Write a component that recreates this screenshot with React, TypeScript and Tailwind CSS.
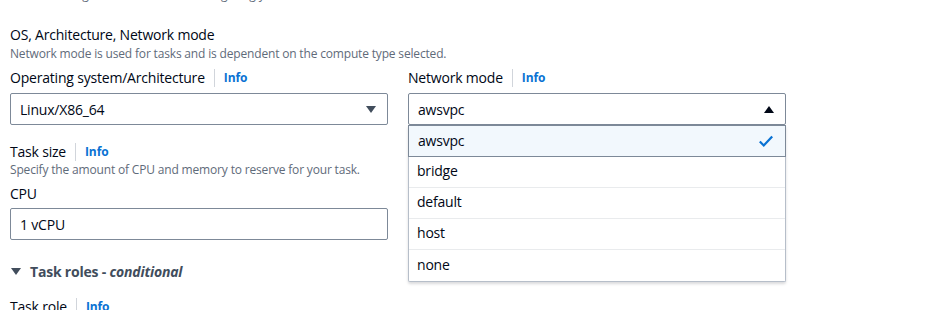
import React from "react";

function Info() {
  return (
    <span className="flex items-center">
      <span className="mx-[9px] h-[18px] w-px bg-[#d1d5db]" />
      <span className="text-[12px] font-bold tracking-[-0.1px] text-[#0972d3]">Info</span>
    </span>
  );
}

function Label({ children }: { children: React.ReactNode }) {
  return (
    <div className="flex h-[22px] items-center text-[14px] leading-[22px] tracking-[-0.2px] text-[#000716]">
      <span>{children}</span>
      <Info />
    </div>
  );
}

function Caret({ up }: { up?: boolean }) {
  return (
    <svg width="12" height="10" viewBox="0 0 12 10" className="shrink-0">
      {up ? (
        <path d="M1 9 L6 2 L11 9 Z" fill="#000716" />
      ) : (
        <path d="M1 2 L11 2 L6 9 Z" fill="#414d5c" />
      )}
    </svg>
  );
}

const options = ["awsvpc", "bridge", "default", "host", "none"];

export default function App() {
  return (
    <div
      className="h-[310px] w-[941px] overflow-hidden bg-white pl-[10px] text-[#000716]"
      style={{ fontFamily: '"Open Sans", "Liberation Sans", sans-serif' }}
    >
      <div className="-mt-[13px] h-[16px] text-[12px] leading-[16px] tracking-[-0.17px] text-[#5f6b7a]">
        Choose the right environment for configuring your task
      </div>
      <div className="mt-[21px] text-[14px] leading-[22px] tracking-[-0.2px]">OS, Architecture, Network mode</div>
      <div className="text-[12px] leading-[16px] tracking-[-0.17px] text-[#5f6b7a]">
        Network mode is used for tasks and is dependent on the compute type selected.
      </div>
      <div className="mt-[5px] grid w-[776px] grid-cols-2 gap-x-[20px]">
        <div className="flex flex-col">
          <Label>Operating system/Architecture</Label>
          <div className="mt-[4px] flex h-[32px] items-center justify-between rounded-[2px] border border-[#7d8998] pl-[9px] pr-[10px] text-[14px] tracking-[-0.2px]">
            <span>Linux/X86_64</span>
            <Caret />
          </div>
          <div className="mt-[16px]">
            <Label>Task size</Label>
          </div>
          <div className="-mt-[1px] text-[12px] leading-[16px] tracking-[-0.17px] text-[#5f6b7a]">
            Specify the amount of CPU and memory to reserve for your task.
          </div>
          <div className="mt-[5px] h-[22px] text-[14px] leading-[22px] tracking-[-0.2px]">CPU</div>
          <div className="mt-[3px] flex h-[32px] items-center rounded-[2px] border border-[#7d8998] pl-[9px] text-[14px] tracking-[-0.2px]">
            1 vCPU
          </div>
          <div className="mt-[20px] flex h-[22px] items-center gap-[8px] text-[14px] font-bold tracking-[-0.2px] text-[#414d5c]">
            <svg width="12" height="10" viewBox="0 0 12 10">
              <path d="M1 2 L11 2 L6 9 Z" fill="#414d5c" />
            </svg>
            <span>
              Task roles - <span className="italic">conditional</span>
            </span>
          </div>
          <div className="mt-[14px]">
            <Label>Task role</Label>
          </div>
        </div>
        <div className="relative flex flex-col">
          <Label>Network mode</Label>
          <div className="mt-[4px] flex h-[32px] items-center justify-between rounded-[2px] border border-[#7d8998] pl-[9px] pr-[10px] text-[14px] tracking-[-0.2px]">
            <span>awsvpc</span>
            <Caret up />
          </div>
          <div className="absolute left-0 top-[58px] w-full rounded-b-[2px] border-x border-b border-[#b6bec9] bg-white text-[14px] tracking-[-0.2px] shadow-[0_2px_3px_rgba(0,7,22,0.15)]">
            {options.map((o, i) =>
              i === 0 ? (
                <div
                  key={o}
                  className="-mx-px flex h-[32px] items-center justify-between border border-[#7d8998] bg-[#f2f8fd] pb-[1px] pl-[9px] pr-[10px]"
                >
                  <span>{o}</span>
                  <svg width="18" height="18" viewBox="0 0 16 16">
                    <path d="M2.5 8.5 L6 12 L13.5 4" fill="none" stroke="#0972d3" strokeWidth="2" />
                  </svg>
                </div>
              ) : (
                <div
                  key={o}
                  className={`flex h-[31px] items-center pb-[3px] pl-[8px] ${i < options.length - 1 ? "border-b border-[#e9ebed]" : ""}`}
                >
                  {o}
                </div>
              )
            )}
          </div>
        </div>
      </div>
    </div>
  );
}
